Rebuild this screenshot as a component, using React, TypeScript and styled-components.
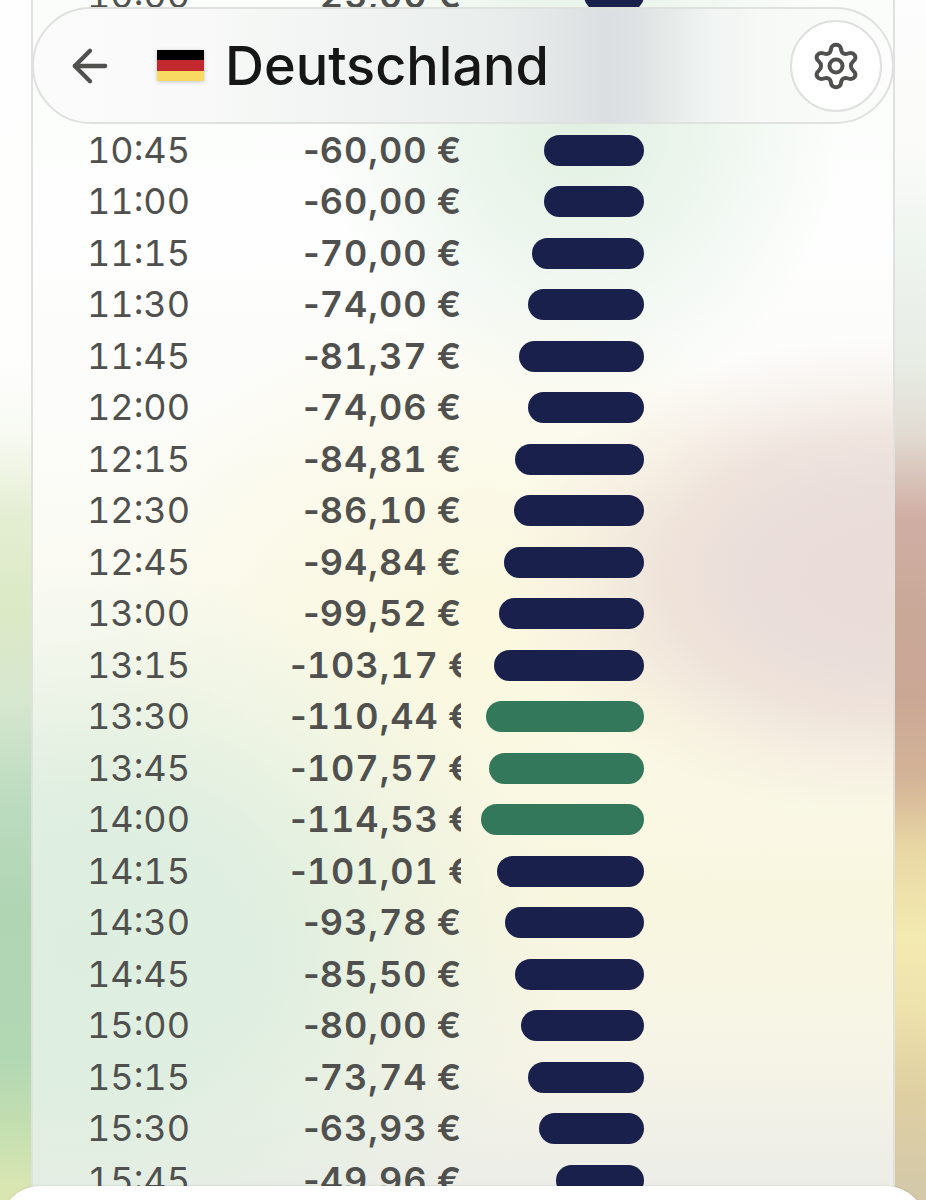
import React from "react";
import styled, { createGlobalStyle } from "styled-components";
import { ArrowLeft } from "lucide-react";

const Global = createGlobalStyle`
  * { box-sizing: border-box; }
  body { margin: 0; font-family: Inter, "Liberation Sans", sans-serif; color: #50514e; }
`;

const Screen = styled.div`
  position: relative;
  height: 100vh;
  overflow: hidden;
  padding: 0 31px;
  background:
    linear-gradient(to bottom, #fdfefd 0%, #fefefd 30%, #f8faf3 36%, #e4eed2 43%, #dbe9c5 51%, #d8e8d0 58%, #bddcc0 66%, #afd5b3 76%, #b1d7b3 88%, #c4dfb0 94%, #d9e6b2 99%) left / 50% 100% no-repeat,
    linear-gradient(to bottom, #fcfdfc 0%, #fafbf9 13%, #eff5ef 20%, #e7ede5 30%, #e2dcd3 36%, #d0aea4 43%, #caa898 51%, #caa795 58%, #d4b498 65%, #e9d8a4 71%, #f3eab1 78%, #eee2ac 84%, #dfcfa2 91%, #d4c9a9 99%) right / 50% 100% no-repeat;
`;

const Card = styled.main`
  height: 100%;
  overflow: hidden;
  padding-left: 54px;
  border: solid #dfe1df;
  border-width: 0 2px;
  background:
    radial-gradient(ellipse 46% 20% at 100% 48%, rgba(233, 220, 217, 1) 0%, rgba(233, 220, 217, 0.95) 35%, rgba(235, 220, 213, 0.75) 58%, rgba(238, 222, 212, 0.3) 80%, rgba(240, 226, 214, 0) 100%),
    radial-gradient(ellipse 30% 24% at 64% 10%, rgba(225, 240, 226, 1) 0%, rgba(225, 240, 226, 0.6) 45%, rgba(225, 240, 226, 0) 100%),
    radial-gradient(ellipse 56% 32% at 6% 79%, rgba(221, 238, 224, 1) 0%, rgba(221, 238, 224, 0.9) 40%, rgba(221, 238, 224, 0.35) 72%, rgba(221, 238, 224, 0) 100%),
    radial-gradient(ellipse 45% 28% at 52% 52%, rgba(251, 248, 222, 1) 0%, rgba(251, 248, 222, 0.5) 55%, rgba(251, 248, 222, 0) 100%),
    linear-gradient(to bottom, #fbfdfb 0%, #fdfefd 20%, #fcfcfa 34%, #fafaf0 54%, #f9f6df 75%, #f6f4e6 88%, #ecede8 99%);
`;

const Prices = styled.table`
  margin-top: -30px;
  border-collapse: collapse;
  font-size: 36px;
  line-height: 51px;
`;

const Row = styled.tr`
  height: 51px;
  &:nth-child(even) { height: 52px; }
`;

const Time = styled.th.attrs({ scope: "row" })`
  width: 162px;
  padding: 0;
  text-align: left;
  font-weight: 400;
  font-variant-numeric: tabular-nums;
`;

const Price = styled.td`
  width: 212px;
  padding: 0;
  font-weight: 600;
`;

const Amount = styled.div<{ $wide: boolean }>`
  width: ${(p) => (p.$wide ? 171 : 158)}px;
  margin-left: auto;
  overflow: hidden;
  white-space: nowrap;
`;

const Digits = styled.span`
  letter-spacing: 1px;
  font-variant-numeric: tabular-nums;
`;

const BarCell = styled.td`
  width: 183px;
  padding: 0;
`;

const Bar = styled.div<{ $best: boolean }>`
  height: 31px;
  margin-left: auto;
  border-radius: 16px;
  background: ${(p) => (p.$best ? "#33785a" : "#1a204c")};
`;

const Header = styled.header`
  position: absolute;
  top: 7px;
  left: 32px;
  right: 32px;
  height: 117px;
  display: flex;
  align-items: center;
  padding: 0 10px 0 30px;
  border: 2px solid #dfe1df;
  border-radius: 59px;
  background: linear-gradient(to right, #fbfbfb 0%, #f8f9f8 20%, #f2f5f3 32%, #edf1ef 44%, #e9edec 54%, #e3e7e7 60%, #dee2e3 64%, #dcdfe1 67%, #dfe3e4 71%, #e8edeb 75%, #f0f4f2 79%, #f6f9f6 85%, #fcfdfc 100%);
`;

const IconButton = styled.button`
  display: flex;
  align-items: center;
  justify-content: center;
  padding: 0;
  border: 0;
  background: none;
  color: #50514f;
`;

const SettingsButton = styled(IconButton)`
  width: 92px;
  height: 92px;
  margin-left: auto;
  border: 2px solid #dfe1df;
  border-radius: 50%;
  background: #fff;
`;

const Flag = styled.svg`
  margin: 0 21px 0 41px;
  filter: drop-shadow(0 1px 2px rgba(0, 0, 0, 0.2));
`;

const Title = styled.h1`
  margin: 0;
  font-size: 54px;
  line-height: 60px;
  font-weight: 500;
  color: #151615;
`;

const Sheet = styled.section`
  position: absolute;
  left: 0;
  right: 0;
  bottom: -46px;
  height: 60px;
  border-radius: 40px 40px 0 0;
  background: #fff;
  box-shadow: 0 0 3px rgba(0, 0, 0, 0.12);
`;

const prices: [string, number][] = [
  ["10:00", 25], ["10:15", 35], ["10:30", 50], ["10:45", 60],
  ["11:00", 60], ["11:15", 70], ["11:30", 74], ["11:45", 81.37],
  ["12:00", 74.06], ["12:15", 84.81], ["12:30", 86.1], ["12:45", 94.84],
  ["13:00", 99.52], ["13:15", 103.17], ["13:30", 110.44], ["13:45", 107.57],
  ["14:00", 114.53], ["14:15", 101.01], ["14:30", 93.78], ["14:45", 85.5],
  ["15:00", 80], ["15:15", 73.74], ["15:30", 63.93], ["15:45", 49.96],
];

const barWidth = (price: number) => Math.round(31 + price * 1.15);

export default function App() {
  return (
    <>
      <Global />
      <Screen>
        <Card>
          <Prices>
            <tbody>
              {prices.map(([time, price]) => (
                <Row key={time}>
                  <Time>{time}</Time>
                  <Price>
                    <Amount $wide={price >= 100}>
                      -<Digits>{price.toFixed(2).replace(".", ",")}</Digits> €
                    </Amount>
                  </Price>
                  <BarCell>
                    <Bar $best={price > 105} style={{ width: barWidth(price) }} />
                  </BarCell>
                </Row>
              ))}
            </tbody>
          </Prices>
        </Card>
        <Header>
          <IconButton aria-label="Zurück">
            <ArrowLeft size={52} strokeWidth={2} />
          </IconButton>
          <Flag width="47" height="31" viewBox="0 0 47 31" role="img" aria-label="Flagge">
            <path fill="#000" d="M0 0h47v10H0z" />
            <path fill="#c3282f" d="M0 10h47v11H0z" />
            <path fill="#f8d961" d="M0 21h47v10H0z" />
          </Flag>
          <Title>Deutschland</Title>
          <SettingsButton aria-label="Einstellungen">
            <svg width="48" height="52" viewBox="-24 -26 48 52" fill="none" stroke="currentColor" strokeWidth="4" strokeLinejoin="round">
              <path d="M-5 -17C-4.5 -22.6 4.5 -22.6 5 -17C5.5 -12 9 -11.3 12 -12.5C18 -14.8 22 -8.5 17.5 -5C14 -2 14 2 17.5 5C22 8.5 18 14.8 12 12.5C9 11.3 5.5 12 5 17C4.5 22.6 -4.5 22.6 -5 17C-5.5 12 -9 11.3 -12 12.5C-18 14.8 -22 8.5 -17.5 5C-14 2 -14 -2 -17.5 -5C-22 -8.5 -18 -14.8 -12 -12.5C-9 -11.3 -5.5 -12 -5 -17Z" />
              <circle r="6.5" />
            </svg>
          </SettingsButton>
        </Header>
        <Sheet />
      </Screen>
    </>
  );
}
